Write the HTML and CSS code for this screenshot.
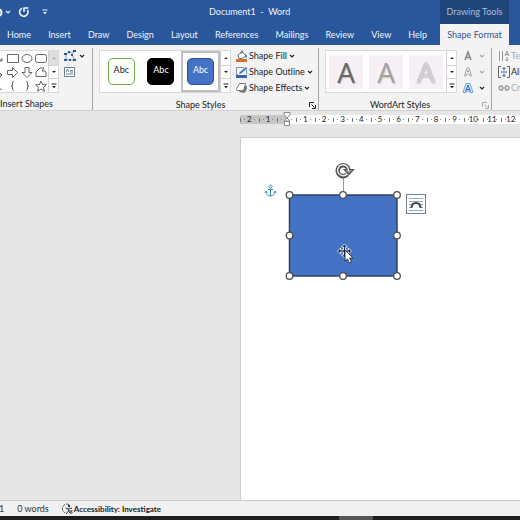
FILE: index.html
```html
<!DOCTYPE html>
<html lang="en">
<head>
<meta charset="utf-8">
<title>Document1 - Word</title>
<link rel="stylesheet" href="styles.css">
</head>
<body>
<svg class="defs" aria-hidden="true">
  <symbol id="chev" viewBox="0 0 6 6"><path d="M1 2l2 2 2-2" fill="none" stroke="currentColor" stroke-width="1.2"/></symbol>
  <symbol id="up" viewBox="0 0 6 6"><path d="M1.200 4L3 2l1.800 2z" fill="currentColor"/></symbol>
  <symbol id="down" viewBox="0 0 6 6"><path d="M1 2h4L3 4z" fill="currentColor"/></symbol>
  <symbol id="more" viewBox="0 0 6 6"><path d="M.5.500h5v1h-5zM1 3h4L3 5.200z" fill="currentColor"/></symbol>
  <symbol id="launch" viewBox="0 0 7 7"><path d="M.5 5V.5H5M2.500 2.500l3 3M6.500 3v3.500H3" fill="none" stroke="currentColor"/></symbol>
</svg>

<header class="header">
  <div class="titlebar">
    <div class="qat">
      <button class="plain undo" aria-label="Undo"><svg width="12" height="12" viewBox="0 0 12 12"><path d="M3 3h4a3.500 3.500 0 0 1 0 7H5" fill="none" stroke="currentColor" stroke-width="2"/></svg></button>
      <button class="plain" aria-label="Undo list"><svg width="6" height="6"><use href="#chev"/></svg></button>
      <button class="plain redo" aria-label="Repeat"><svg width="12" height="12" viewBox="0 0 12 12"><path d="M4 2.200A4.200 4.200 0 1 0 9.500 4M6 6V2h4.500" fill="none" stroke="currentColor" stroke-width="1.600"/></svg></button>
      <button class="plain customize" aria-label="Customize toolbar"><svg width="6" height="6"><use href="#more"/></svg></button>
    </div>
    <h1 class="title">Document1&nbsp; -&nbsp; Word</h1>
  </div>
  <div class="context">Drawing Tools</div>
  <nav class="tabs">
    <a href="#">Home</a><a href="#">Insert</a><a href="#">Draw</a><a href="#">Design</a><a href="#">Layout</a><a href="#">References</a><a href="#">Mailings</a><a href="#">Review</a><a href="#">View</a><a href="#">Help</a>
  </nav>
  <a class="tab-active" href="#">Shape Format</a>
</header>

<section class="ribbon">
  <div class="group">
    <div class="tools">
      <div class="gallery shapes">
        <div class="shape-grid">
          <svg viewBox="0 0 14 14"><path d="M3 4l7 6M10 7v3H7"/></svg>
          <svg viewBox="0 0 14 14"><path d="M1.500 3.500h11v8h-11z"/></svg>
          <svg viewBox="0 0 14 14"><ellipse cx="7" cy="7.500" rx="5" ry="4"/></svg>
          <svg viewBox="0 0 14 14"><rect x="1.500" y="3.500" width="11" height="8" rx="2"/></svg>
          <svg viewBox="0 0 14 14"><path d="M2 4v6h8M8 8l2 2-2 2"/></svg>
          <svg viewBox="0 0 14 14"><path d="M1.500 5.500h5V2.500l5 5-5 5v-3h-5z"/></svg>
          <svg viewBox="0 0 14 14"><path d="M5 2.500h4v5h3l-5 5-5-5h3z"/></svg>
          <svg viewBox="0 0 14 14"><path d="M2 11.500V7l4-4h4L8 6q4-1 4 2v3.500z"/></svg>
          <svg viewBox="0 0 14 14"><path d="M5 3l2 6 3 2"/></svg>
          <svg viewBox="0 0 14 14"><path d="M8 2.500Q6 2.500 6.500 5T5 7Q7 7 6.500 9T8 11.500"/></svg>
          <svg viewBox="0 0 14 14"><path d="M6 2.500Q8 2.500 7.500 5T9 7Q7 7 7.500 9T6 11.500"/></svg>
          <svg viewBox="0 0 14 14"><path d="M7 2l1.500 3.500 4 .3-3 2.500 1 4L7 10l-3.500 2.300 1-4-3-2.500 4-.3z"/></svg>
        </div>
        <div class="scroll">
          <button class="off" aria-label="Previous shapes"><svg width="6" height="6"><use href="#up"/></svg></button>
          <button aria-label="Next shapes"><svg width="6" height="6"><use href="#down"/></svg></button>
          <button aria-label="More shapes"><svg width="6" height="6"><use href="#more"/></svg></button>
        </div>
      </div>
      <div class="stack edit">
        <button class="plain" aria-label="Edit shape"><svg width="13" height="12" viewBox="0 0 13 12"><path d="M2 9.500V3.500L10 1.500 8 5l3 5z" fill="none" stroke="#8ba3c7"/><path d="M0 3h3v2H0zM4 1h2v2H4zM9 0h3v2H9zM7 4h2v2H7zM0 9h3v2H0zM5 9h2v2H5zM9 9h3v2H9z" fill="#2b579a"/></svg><svg class="arrow" width="6" height="6"><use href="#chev"/></svg></button>
        <button class="plain" aria-label="Draw text box"><svg width="12" height="10" viewBox="0 0 12 10"><path d="M.5.500h10v9H.5z" fill="#fff" stroke="#6c7e93"/><path d="M2 5l1.500-3L5 5M6 3.500h3M6 5h3M2 7h7" fill="none" stroke="#6c7e93"/></svg></button>
      </div>
    </div>
    <div class="caption first">Insert Shapes</div>
  </div>

  <div class="group">
    <div class="tools">
      <div class="gallery">
        <div class="styles">
          <button class="style"><span class="swatch green">Abc</span></button>
          <button class="style"><span class="swatch black">Abc</span></button>
          <button class="style chosen"><span class="swatch blue">Abc</span></button>
        </div>
        <div class="scroll">
          <button aria-label="Previous styles"><svg width="6" height="6"><use href="#up"/></svg></button>
          <button aria-label="Next styles"><svg width="6" height="6"><use href="#down"/></svg></button>
          <button aria-label="More styles"><svg width="6" height="6"><use href="#more"/></svg></button>
        </div>
      </div>
      <div class="stack">
        <button class="plain"><svg width="12" height="12" viewBox="0 0 12 12"><path d="M2 5l4-3 4 4-4 2.500H3z" fill="#fff" stroke="#6b7787"/><path d="M5 4V1.500Q6 0 7 1.500V3" fill="none" stroke="#6b7787"/><path d="M9 4q2 0 2 4-2-1-2-4z" fill="#3d72b8"/><path d="M0 9h11v3H0z" fill="#d9702b"/></svg>Shape Fill<svg class="arrow" width="6" height="6"><use href="#chev"/></svg></button>
        <button class="plain"><svg width="12" height="12" viewBox="0 0 12 12"><path d="M8 1.500H.5v7H2M10.500 4v4" fill="none" stroke="#8294aa"/><path d="M3 8l1-2 6-5 1.300 1.300L5 7.500z" fill="#3d72b8"/><path d="M0 9h11v3H0z" fill="#3665ad"/></svg>Shape Outline<svg class="arrow" width="6" height="6"><use href="#chev"/></svg></button>
        <button class="plain"><svg width="12" height="12" viewBox="0 0 12 12"><path d="M3 10l5 1q3-2 3-6L10 3z" fill="#777"/><path d="M3.500 1.500h6L8 7q0 1-1.500 1.500h-5Q0 8 .7 6.500z" fill="#fff" stroke="#777"/></svg>Shape Effects<svg class="arrow" width="6" height="6"><use href="#chev"/></svg></button>
      </div>
    </div>
    <div class="caption">Shape Styles<button class="plain launcher" aria-label="Format shape"><svg width="7" height="7"><use href="#launch"/></svg></button></div>
  </div>

  <div class="group">
    <div class="tools">
      <div class="gallery">
        <div class="wordart">
          <button class="art dark">A</button>
          <button class="art mid">A</button>
          <button class="art light">A</button>
        </div>
        <div class="scroll">
          <button aria-label="Previous WordArt"><svg width="6" height="6"><use href="#up"/></svg></button>
          <button aria-label="Next WordArt"><svg width="6" height="6"><use href="#down"/></svg></button>
          <button aria-label="More WordArt"><svg width="6" height="6"><use href="#more"/></svg></button>
        </div>
      </div>
      <div class="stack letters">
        <button class="plain dim" aria-label="Text fill"><svg width="12" height="12" viewBox="0 0 12 12"><path d="M3 10l3-8 3 8M4 7.500h4" fill="none" stroke="#858585" stroke-width="1.500"/></svg><svg class="arrow" width="6" height="6"><use href="#chev"/></svg></button>
        <button class="plain dim" aria-label="Text outline"><svg width="12" height="12" viewBox="0 0 12 12"><path d="M2.500 10l2.500-8h2l2.500 8H8L7.300 8H4.700L4 10zM5.300 6h1.400L6 4z" fill="#fff" stroke="#a5a5a5"/></svg><svg class="arrow" width="6" height="6"><use href="#chev"/></svg></button>
        <button class="plain" aria-label="Text effects"><svg width="12" height="12" viewBox="0 0 12 12"><path d="M1 10.500L4 1.500h4l3 9H8L7.300 9H4.700L4 10.500z" fill="#dcebfa" stroke="#75a5d8"/><path d="M3.500 9.500L6 3l2.500 6.500M4.500 7.500h3" fill="none" stroke="#2861a8"/></svg><svg class="arrow" width="6" height="6"><use href="#chev"/></svg></button>
      </div>
    </div>
    <div class="caption">WordArt Styles<button class="plain launcher dim" aria-label="Format text effects"><svg width="7" height="7"><use href="#launch"/></svg></button></div>
  </div>

  <div class="group">
    <div class="tools">
      <div class="stack">
        <button class="plain dim"><svg width="12" height="12" viewBox="0 0 12 12"><path d="M1.500 1v10M4.500 1v10M7 6l1.800-5L11 6M7.500 4.500h3M9 7v4M7.500 9.500L9 11l1.500-1.500" fill="none" stroke="#999"/></svg>Text Direction</button>
        <button class="plain"><svg width="12" height="12" viewBox="0 0 12 12"><path d="M3 .5H.5v11H3M9 .5h2.500v11H9" fill="none" stroke="#666"/><path d="M3 6h6M6 1.500v3M6 7.500v3M4.500 3L6 1.500 7.500 3M4.500 9L6 10.500 7.500 9" fill="none" stroke="#3665ad"/></svg>Align Text</button>
        <button class="plain dim"><svg width="12" height="12" viewBox="0 0 12 12"><path d="M5 8H3Q1 8 1 6t2-2h2M7 4h2q2 0 2 2T9 8H7M3.500 6h5" fill="none" stroke="#999" stroke-width="1.300"/></svg>Create Link</button>
      </div>
    </div>
  </div>
</section>

<main class="workspace">
  <div class="ruler">
    <span>2</span><span>1</span><span class="zero"><svg width="8" height="16" viewBox="0 0 8 16"><path d="M1 1.500h6v2L4 7 1 3.500zM4 7l3 3H1zM1.500 10.500h5v4h-5z" fill="#fff" stroke="#8a8a8a"/></svg></span><span>1</span><span>2</span><span>3</span><span>4</span><span>5</span><span>6</span><span>7</span><span>8</span><span>9</span><span>10</span><span>11</span><span>12</span>
  </div>
  <article class="page">
    <svg class="drawing" width="170" height="124" viewBox="262 158 170 124" role="img" aria-label="Selected blue rectangle">
      <g fill="none" stroke="#4089b5"><circle cx="270.500" cy="186.500" r="1.500"/><path d="M270.500 188v8M268 189.500h5M266 191.500q0 4 4.500 4.500 4.500-.5 4.500-4.500M265 193l1-2 1.500 1.500M273.500 192.500l1.500-1.500 1 2"/></g>
      <path d="M343.500 178v14" stroke="#999"/>
      <rect x="289.500" y="195" width="107.500" height="81" fill="#4472c4" stroke="#2d4268" stroke-width="1.500"/>
      <g fill="#fff" stroke="#505050" stroke-width="1.300"><circle cx="289.500" cy="195" r="3.300"/><circle cx="343" cy="195" r="3.300"/><circle cx="397" cy="195" r="3.300"/><circle cx="289.500" cy="235.500" r="3.300"/><circle cx="397" cy="235.500" r="3.300"/><circle cx="289.500" cy="276" r="3.300"/><circle cx="343" cy="276" r="3.300"/><circle cx="397" cy="276" r="3.300"/></g>
      <path d="M347.200 174.500A5.500 5.500 0 1 1 348.500 169.500" fill="none" stroke="#555" stroke-width="4.400"/>
      <path d="M344.200 169.500h9.300l-4.600 5z" fill="#999" stroke="#555" stroke-width="1.200"/>
      <path d="M346.900 174.200A5.500 5.500 0 1 1 348.500 171" fill="none" stroke="#fff" stroke-width="1.300"/>
      <rect x="406.500" y="194.500" width="19" height="19" fill="#fff" stroke="#74808a"/>
      <path d="M409 198.500h14M409 201.500h14M409 204.500h2M421 204.500h2M409 207.500h2M421 207.500h2M409 210.500h14" stroke="#8babc4"/>
      <path d="M411.500 208q0-5 4.500-5t4.500 5" fill="none" stroke="#444" stroke-width="2"/>
      <path d="M344.500 244l3 3h-2v3h3v-2l3 3-3 3v-2h-3v3h2l-3 3-3-3h2v-3h-3v2l-3-3 3-3v2h3v-3h-2z" fill="#182848" stroke="#fff" stroke-width=".8"/>
      <path d="M345 250v11l2.500-2 2 4 2-1-2-4h3.500z" fill="#fff" stroke="#222" stroke-width=".8"/>
    </svg>
  </article>
</main>

<footer class="status">
  <span>1</span><span class="words">0 words</span>
  <button class="plain access"><svg width="13" height="12" viewBox="0 0 13 12"><path d="M8 1.500A4.500 4.500 0 1 0 4 9.800" fill="none" stroke="#555" stroke-dasharray="3 1"/><circle cx="8" cy="3" r="1.200" fill="#333"/><path d="M4.500 5l3 1 3.500-1M7.500 6v2L5 11M7.500 8l3 3M8.500 7l3 3M11.500 7l-3 3" fill="none" stroke="#333"/></svg>Accessibility: Investigate</button>
</footer>
<div class="taskbar"><span class="task"></span></div>
</body>
</html>
```

FILE: styles.css
```css
* { box-sizing: border-box; }

body {
  margin: 0;
  min-height: 100vh;
  display: flex;
  flex-direction: column;
  overflow: hidden;
  background: #e6e6e6;
  color: #222;
  font: 9px/12px Lato, "Noto Sans", sans-serif;
}

.defs { position: absolute; width: 0; height: 0; }
svg { flex: none; display: block; }
a { color: inherit; text-decoration: none; }
button { font: inherit; color: inherit; padding: 0; }

.plain {
  display: flex;
  align-items: center;
  border: 0;
  background: none;
  white-space: nowrap;
}

/* Title bar and tabs */
.header {
  display: grid;
  grid-template-columns: 440px 69px 1fr;
  grid-template-rows: 24px 21px;
  background: #2a569b;
  color: #f0f5fc;
}
.titlebar { display: flex; align-items: center; }
.qat { display: flex; align-items: center; width: 209px; }
.undo { margin-left: -9px; margin-right: 2px; }
.redo { margin-left: 7px; }
.customize { margin-left: 12px; }
.title { margin: 0; font-size: 9px; font-weight: 400; }
.context {
  display: flex;
  align-items: center;
  justify-content: center;
  background: #204679;
  color: #a9bddb;
}
.tabs {
  grid-row: 2;
  grid-column: 1;
  display: flex;
  align-items: center;
  justify-content: space-between;
  padding: 0 13px 0 7px;
}
.tab-active {
  grid-row: 2;
  grid-column: 2;
  display: flex;
  align-items: center;
  justify-content: center;
  background: #f3f3f3;
  color: #2b579a;
}

/* Ribbon */
.ribbon {
  display: grid;
  grid-template-columns: 93px 226px 173px 1fr;
  padding: 3px 0 0;
  background: #f3f3f3;
  border-bottom: 1px solid #d2d2d2;
}
.group {
  min-width: 0;
  overflow: hidden;
  padding: 2px 2px 0 6px;
  border-right: 1px solid #a5a5a5;
}
.group:first-child { padding-left: 0; }
.group:last-child { border-right: 0; }
.tools { display: flex; gap: 5px; }
.caption {
  display: flex;
  justify-content: center;
  position: relative;
  margin-top: 6px;
  padding-right: 14px;
  line-height: 10px;
}
.caption.first { justify-content: flex-start; padding-right: 0; }
.launcher { position: absolute; right: 0; top: 2px; }

.gallery {
  display: flex;
  height: 43px;
  background: #fff;
  border: 1px solid #d9d9d9;
}
.scroll { display: grid; grid-template-rows: repeat(3, 1fr); width: 10px; }
.scroll button {
  display: grid;
  place-items: center;
  border: 0;
  border-left: 1px solid #d2d2d2;
  background: #fff;
}
.scroll button + button { border-top: 1px solid #d2d2d2; }
.scroll .off { background: #dedede; color: #aaa; }

.shapes { border-left: 0; overflow: hidden; }
.shape-grid {
  display: grid;
  grid-template-columns: repeat(4, 14px);
  margin-left: -8px;
}
.shape-grid svg {
  height: 14px;
  fill: none;
  stroke: #666;
}

.stack { display: flex; flex-direction: column; gap: 4px; }
.stack .plain { gap: 1px; height: 12px; }
.stack .arrow { margin-left: 1px; }
.letters .arrow { margin-left: 4px; }
.dim, .stack .dim { color: #aaa; }

.styles { display: flex; gap: 1px; padding-left: 2px; width: 120px; }
.style {
  display: grid;
  place-items: center;
  width: 39px;
  border: 0;
  background: none;
}
.chosen { border: 2px solid #c0c0c0; }
.swatch {
  display: grid;
  place-items: center;
  width: 27px;
  height: 27px;
  padding-bottom: 3px;
  border: 1px solid;
  border-radius: 5px;
}
.green { border-color: #70ad47; color: #222; }
.black { border-color: #000; background: #000; color: #fff; }
.blue { border-color: #2f528f; background: #4472c4; color: #fff; }

.wordart { display: flex; align-items: center; gap: 6px; padding: 0 3px; }
.art {
  width: 34px;
  height: 34px;
  border: 0;
  background: #f7f0f7;
  font: 500 28px/34px "Open Sans", sans-serif;
}
.dark { color: #666; text-shadow: 1px 1px 1px #bbb; }
.mid { color: #a2a2a2; text-shadow: 1px 1px 1px #ccc; }
.light { color: #d2d2d2; text-shadow: 0 0 2px #888; }

/* Document area */
.workspace {
  flex: 1;
  display: flex;
  flex-direction: column;
  padding: 4px 0 0 240px;
  border-bottom: 1px solid #c9c9c9;
}
.ruler {
  display: grid;
  grid-template-columns: repeat(15, 1fr);
  height: 9px;
  background: linear-gradient(90deg, #c6c6c6 48px, #fff 48px);
  color: #222;
  font-size: 8px;
  line-height: 9px;
  text-align: center;
}
.ruler span {
  position: relative;
  background:
    linear-gradient(#777, #777) 0 50% / 1px 4px no-repeat,
    linear-gradient(#888, #888) 22% 50% / 1px 1px no-repeat,
    linear-gradient(#888, #888) 78% 50% / 1px 1px no-repeat;
}
.zero svg { position: absolute; left: 6px; top: -4px; }
.page {
  flex: 1;
  margin-top: 13px;
  padding: 20px 0 0 21px;
  background: #fff;
  border: 1px solid #cfcfcf;
  border-width: 1px 0 0 1px;
}

/* Status bar */
.status {
  display: flex;
  align-items: center;
  height: 15px;
  background: #f1f1f1;
  color: #333;
}
.status > span:first-child { margin-left: -1px; }
.words { margin-left: 13px; }
.access { margin-left: 12px; color: #222; font-size: 8px; font-weight: 700; }
.taskbar { height: 4px; background: #211f1e; padding-left: 339px; }
.task { display: block; width: 34px; height: 4px; background: #555; }
```
